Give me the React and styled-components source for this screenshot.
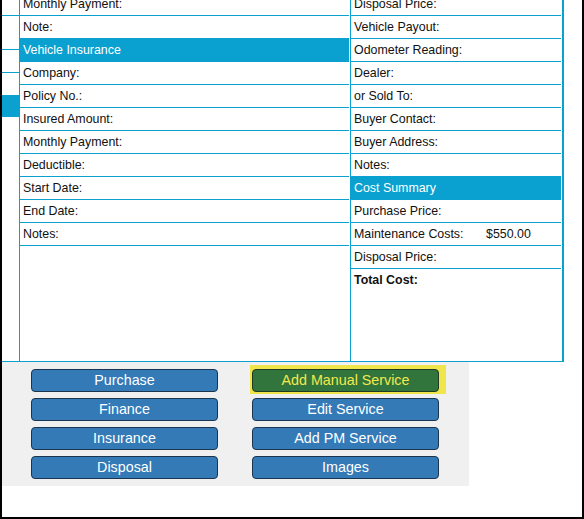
import React from 'react'
import styled, { createGlobalStyle } from 'styled-components'

const GlobalStyle = createGlobalStyle`
  html, body {
    margin: 0;
    padding: 0;
    background: #000;
  }
  body {
    font-family: "Liberation Sans", Arial, sans-serif;
  }
`

const blue = '#0aa0d0'

const leftRows = [
  { label: 'Monthly Payment:' },
  { label: 'Note:' },
  { label: 'Vehicle Insurance', head: true },
  { label: 'Company:' },
  { label: 'Policy No.:' },
  { label: 'Insured Amount:' },
  { label: 'Monthly Payment:' },
  { label: 'Deductible:' },
  { label: 'Start Date:' },
  { label: 'End Date:' },
  { label: 'Notes:' },
]

const rightRows = [
  { label: 'Disposal Price:' },
  { label: 'Vehicle Payout:' },
  { label: 'Odometer Reading:' },
  { label: 'Dealer:' },
  { label: 'or Sold To:' },
  { label: 'Buyer Contact:' },
  { label: 'Buyer Address:' },
  { label: 'Notes:' },
  { label: 'Cost Summary', head: true },
  { label: 'Purchase Price:' },
  { label: 'Maintenance Costs:', value: '$550.00' },
  { label: 'Disposal Price:' },
  { label: 'Total Cost:', bold: true, last: true },
]

const buttons = [
  ['Purchase', 'Add Manual Service'],
  ['Finance', 'Edit Service'],
  ['Insurance', 'Add PM Service'],
  ['Disposal', 'Images'],
]

function App() {
  return (
    <>
      <GlobalStyle />
      <Frame>
        <Content>
          <Top>
            <Strip>
              <StripLine $h={22} />
              <StripLine $h={33} />
              <StripLine $h={22} />
              <StripLine $h={22} $plain />
              <StripHead />
            </Strip>
            <LeftCol>
              {leftRows.map((r, i) => (
                <Row key={i} $head={r.head}>{r.label}</Row>
              ))}
            </LeftCol>
            <RightCol>
              {rightRows.map((r, i) => (
                <Row key={i} $head={r.head} $bold={r.bold} $last={r.last}>
                  <Label>{r.label}</Label>
                  {r.value && <span>{r.value}</span>}
                </Row>
              ))}
            </RightCol>
          </Top>
          <ButtonArea>
            {buttons.map(([a, b]) => (
              <React.Fragment key={a}>
                <Button>{a}</Button>
                <Button $active={b === 'Add Manual Service'}>{b}</Button>
              </React.Fragment>
            ))}
          </ButtonArea>
        </Content>
      </Frame>
    </>
  )
}

export default App

const Frame = styled.div`
  margin-left: 2px;
  width: 580px;
  height: 517px;
  background: #fff;
  overflow: hidden;
`

const Content = styled.div`
  margin-top: -7px;
  display: flex;
  flex-direction: column;
`

const Top = styled.div`
  display: flex;
  height: 369px;
`

const Strip = styled.div`
  width: 17px;
  box-sizing: border-box;
  border-bottom: 1px solid ${blue};
  display: flex;
  flex-direction: column;
`

const StripLine = styled.div`
  height: ${p => p.$h}px;
  flex-shrink: 0;
  border-bottom: ${p => (p.$plain ? 'none' : `1px solid ${blue}`)};
`

const StripHead = styled.div`
  height: 22px;
  background: ${blue};
`

const LeftCol = styled.div`
  width: 331px;
  box-sizing: border-box;
  border-left: 1px solid ${blue};
  border-bottom: 1px solid ${blue};
  padding-right: 1px;
  display: flex;
  flex-direction: column;
`

const RightCol = styled.div`
  width: 214px;
  box-sizing: border-box;
  border-left: 1px solid ${blue};
  border-right: 2px solid ${blue};
  border-bottom: 1px solid ${blue};
  padding-right: 1px;
  display: flex;
  flex-direction: column;
`

const Row = styled.div`
  height: 22px;
  flex-shrink: 0;
  display: flex;
  align-items: center;
  padding-left: 3px;
  font-size: 12.4px;
  color: ${p => (p.$head ? '#fff' : '#111')};
  background: ${p => (p.$head ? blue : 'transparent')};
  font-weight: ${p => (p.$bold ? 'bold' : 'normal')};
  border-bottom: ${p => (p.$last ? 'none' : `1px solid ${blue}`)};
  white-space: nowrap;
`

const Label = styled.span`
  width: 132px;
  flex-shrink: 0;
`

const ButtonArea = styled.div`
  width: 467px;
  box-sizing: border-box;
  background: #f0f0f0;
  padding: 7px 0 7px 29px;
  display: grid;
  grid-template-columns: 187px 187px;
  column-gap: 34px;
  row-gap: 6px;
  isolation: isolate;
`

const Button = styled.button`
  position: relative;
  height: 23px;
  box-sizing: border-box;
  border: 1px solid ${p => (p.$active ? '#1f3a22' : '#1b3550')};
  border-radius: 4px;
  background: ${p => (p.$active ? '#31743c' : '#337ab7')};
  color: ${p => (p.$active ? '#f2e94e' : '#fff')};
  font-family: "Liberation Sans", Arial, sans-serif;
  font-size: 14.3px;
  padding: 0;
  line-height: 21px;
  cursor: pointer;

  &::before {
    content: '';
    display: ${p => (p.$active ? 'block' : 'none')};
    position: absolute;
    top: -5px;
    left: -3px;
    right: -8px;
    bottom: -3px;
    background: #f0e64c;
    z-index: -1;
  }
`
